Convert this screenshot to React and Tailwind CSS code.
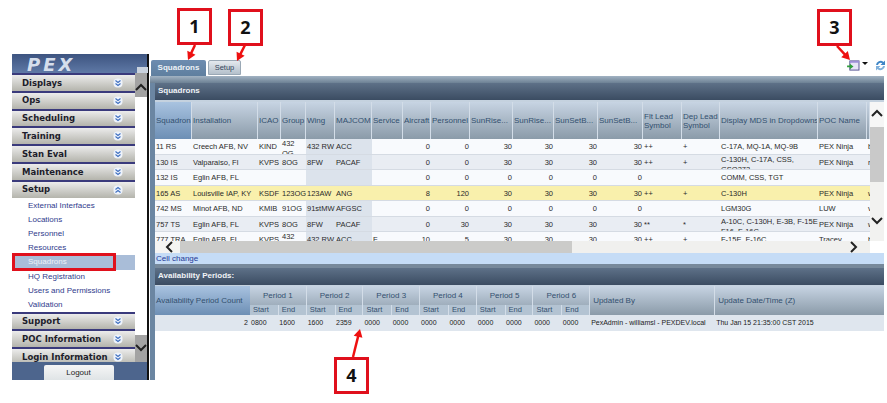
import React from 'react';

const sections = ['Displays', 'Ops', 'Scheduling', 'Training', 'Stan Eval', 'Maintenance'];
const setupLinks = ['External Interfaces', 'Locations', 'Personnel', 'Resources', 'Squadrons', 'HQ Registration', 'Users and Permissions', 'Validation'];

const columns = [
  ['Squadron', 37], ['Installation', 66], ['ICAO', 23], ['Group', 25], ['Wing', 29], ['MAJCOM', 37], ['Service', 31],
  ['Aircraft', 28], ['Personnel', 39], ['SunRise...', 43], ['SunRise...', 41], ['SunSetB...', 44], ['SunSetB...', 45],
  ['Flt Lead Symbol', 39], ['Dep Lead Symbol', 38], ['Display MDS in Dropdowns', 98], ['POC Name', 49], ['', 3],
];

const rows = [
  ['11 RS', 'Creech AFB, NV', 'KIND', '432\nOG', '432 RW', 'ACC', '', 0, 0, 30, 30, 30, 30, '++', '+', 'C-17A, MQ-1A, MQ-9B', 'PEX Ninja', 'b'],
  ['130 IS', 'Valparaiso, Fl', 'KVPS', '8OG', '8FW', 'PACAF', '', 0, 0, 30, 30, 30, 30, '++', '+', 'C-130H, C-17A, CSS,\nGSO272', 'PEX Ninja', 'r'],
  ['132 IS', 'Eglin AFB, FL', '', '', '', '', '', 0, 0, 0, 0, 0, 0, '', '', 'COMM, CSS, TGT', '', ''],
  ['165 AS', 'Louisville IAP, KY', 'KSDF', '123OG', '123AW', 'ANG', '', 8, 120, 30, 30, 30, 30, '++', '+', 'C-130H', 'PEX Ninja', 'w'],
  ['742 MS', 'Minot AFB, ND', 'KMIB', '91OG', '91stMW', 'AFGSC', '', 0, 0, 0, 0, 0, 0, '', '', 'LGM30G', 'LUW', 'v'],
  ['757 TS', 'Eglin AFB, FL', 'KVPS', '8OG', '8FW', 'PACAF', '', 0, 30, 30, 30, 30, 30, '**', '*', 'A-10C, C-130H, E-3B, F-15E,\nF16, F-16C,', 'PEX Ninja', 'w'],
  ['777 TRA', 'Eglin AFB, FL', 'KVPS', '432\nOG', '432 RW', 'ACC', 'F', 10, 5, 30, 30, 30, 30, '++', '+', 'F-15E, F-16C', 'Tracey', 'b'],
];

const periodValues = ['0800', '1600', '1600', '2359', '0000', '0000', '0000', '0000', '0000', '0000', '0000', '0000'];

// little round badge with the double chevrons on each accordion bar
const ChevronBadge = ({ up }) => (
  <svg width="10" height="10" viewBox="0 0 10 10" className="shrink-0">
    <rect x="0.5" y="0.5" width="9" height="9" rx="4" fill="#eef3fb" />
    <path d={up ? 'M2.5 4.5 5 2.5 7.5 4.5M2.5 7.5 5 5.5 7.5 7.5' : 'M2.5 2.5 5 4.5 7.5 2.5M2.5 5.5 5 7.5 7.5 5.5'} fill="none" stroke="#3f6fc0" strokeWidth="1.1" />
  </svg>
);

const SectionBar = ({ label, up }) => (
  <div className="h-[17.8px] shrink-0 flex items-center justify-between pl-[10px] pr-[12px] border-t-2 border-[#3a3a7c] bg-gradient-to-b from-[#ececec] to-[#b4b4ac]">
    <span className="text-[8.5px] font-bold text-[#1d1d2b] font-['DejaVu_Sans',sans-serif] whitespace-nowrap">{label}</span>
    <ChevronBadge up={up} />
  </div>
);

const Chevron = ({ dir, className }) => {
  const d = { up: 'M1 7 6 2l5 5', down: 'M1 2l5 5 5-5', left: 'M7 1 2 6l5 5', right: 'M2 1l5 5-5 5' }[dir];
  return (
    <svg width="12" height="12" viewBox="0 0 12 12" className={className}>
      <path d={d} fill="none" stroke="#222" strokeWidth="2" />
    </svg>
  );
};

const Sidebar = () => (
  <aside className="w-[137px] h-[326px] shrink-0 flex flex-col bg-[#4d658d] border-r-2 border-[#111]">
    <div className="h-[19px] shrink-0 relative pl-[15px] rounded-t-[3px] bg-gradient-to-b from-[#3d5480] to-[#5f79a6]">
      <span className="text-[18px] leading-[18px] font-bold italic tracking-[3px] text-[#d5deec] font-['DejaVu_Sans',sans-serif]">PEX</span>
      <span className="absolute right-[-1px] bottom-0 w-[11px] h-[6px] bg-[#c9d2de]" />
    </div>
    <div className="h-[289px] shrink-0 flex">
      <div className="w-[123px] shrink-0 flex flex-col overflow-hidden bg-white">
        {sections.map((s) => <SectionBar key={s} label={s} />)}
        <SectionBar label="Setup" up />
        <div className="h-[114px] shrink-0 py-px">
          {setupLinks.map((l) => (
            <div
              key={l}
              className={`h-[14.2px] pl-[16px] text-[8px] leading-[14px] font-['Liberation_Sans',sans-serif] whitespace-nowrap ${l === 'Squadrons' ? 'bg-[#a9bdd8] text-[#eef2f8]' : 'text-[#2f3b8c]'}`}
            >
              {l}
            </div>
          ))}
        </div>
        <SectionBar label="Support" />
        <SectionBar label="POC Information" />
        <SectionBar label="Login Information" />
      </div>
      <div className="flex-1 flex flex-col justify-between bg-white">
        <div className="h-[24px] bg-[#a3a3a3] flex items-end justify-center pb-[2px]"><Chevron dir="up" /></div>
        <div className="h-[27px] bg-[#a3a3a3] flex items-center justify-center"><Chevron dir="down" /></div>
      </div>
    </div>
    <div className="flex-1 flex justify-center pr-[2px] items-end">
      <div className="w-[70px] h-[15px] rounded-t-[2px] bg-gradient-to-b from-[#f6f6f6] to-[#dfe4e6] text-center text-[8px] leading-[15px] text-[#222] font-['Liberation_Sans',sans-serif]">Logout</div>
    </div>
  </aside>
);

const ExportIcon = () => (
  <svg width="13" height="11" viewBox="0 0 14 12">
    <rect x="3" y="1" width="10" height="10" fill="#e6e4f6" stroke="#4d4a8c" />
    <rect x="3" y="1" width="10" height="2" fill="#9c8fd6" />
    <path d="M0 6h3V4l4 3-4 3V8H0z" fill="#2f9e3a" />
  </svg>
);

const RefreshIcon = () => (
  <svg width="11" height="13" viewBox="0 0 11 13">
    <path d="M1 6a4.500 4.500 0 0 1 7.500-3L10 1.500V6H5.500L7.300 4.200A2.800 2.800 0 0 0 3 6z" fill="#3f86c6" />
    <path d="M10 7a4.500 4.500 0 0 1-7.500 3L1 11.500V7h4.500L3.700 8.800A2.800 2.800 0 0 0 8 7z" fill="#7fb0dc" />
  </svg>
);

const Tabs = () => (
  <div className="h-[16px] shrink-0 flex items-end pl-px gap-[2px] relative">
    <div className="w-[55px] h-[16px] rounded-t-[2px] bg-gradient-to-b from-[#6d8cb0] to-[#5f7f9f] text-center text-[8px] leading-[15px] font-bold text-[#eef3f8] font-['Liberation_Sans',sans-serif]">Squadrons</div>
    <div className="w-[33px] h-[15px] mb-px rounded-t-[2px] border border-[#9aa8b5] bg-gradient-to-b from-[#e4e9ee] to-[#b4c0cb] text-center text-[7.5px] leading-[13px] text-[#34465c] font-['Liberation_Sans',sans-serif]">Setup</div>
    <div className="ml-auto flex items-start gap-[2px] self-start">
      <ExportIcon />
      <span className="w-0 h-0 mt-[2px] border-x-[3px] border-t-[3px] border-x-transparent border-t-[#111]" />
      <span className="ml-[5px] -mt-px"><RefreshIcon /></span>
    </div>
  </div>
);

const PanelHeader = ({ title }) => (
  <div className="h-[17px] shrink-0 pl-[3px] bg-gradient-to-b from-[#5e7188] to-[#3b4c62] text-[8px] leading-[16px] font-bold text-[#f0f3f7] font-['Liberation_Sans',sans-serif]">{title}</div>
);

const HeadCell = ({ label, width, active }) => (
  <div
    style={{ width }}
    className={`shrink-0 h-full flex items-center px-[1px] overflow-hidden border-r border-[#d3dde8] text-[8px] leading-[9px] text-[#33506f] ${width > 90 ? 'whitespace-nowrap' : ''} ${active ? 'bg-gradient-to-b from-[#a9c3e0] to-[#6d8fb5]' : ''}`}
  >
    {label}
  </div>
);

const Cell = ({ value, width, index, row }) => {
  const numeric = index >= 7 && index <= 12;
  const wrapped = typeof value === 'string' && value.includes('\n');
  const tint = row % 2 === 1 ? 'bg-[#e9edf3]' : 'bg-[#f8fafd]';
  let bg = tint;
  if (row === 3) bg = 'bg-[#f9f0ac]';
  else if (index === 4 || index === 5) bg = 'bg-[#dce3ec]';
  return (
    <div
      style={{ width }}
      className={`shrink-0 h-full overflow-hidden px-[1px] leading-[10px] whitespace-pre ${wrapped ? 'pt-0' : 'pt-[3px]'} ${numeric ? 'text-right' : ''} ${bg}`}
    >
      {value}
    </div>
  );
};

const SquadronGrid = () => (
  <div className="h-[151px] shrink-0 flex flex-col bg-white">
    <div className="h-[139px] shrink-0 flex">
      <div className="w-[715px] shrink-0 overflow-hidden">
        <div className="h-[37px] flex bg-gradient-to-b from-[#c7d4e3] to-[#8b9ba9]">
          {columns.map(([label, w], i) => <HeadCell key={i} label={label} width={w} active={i === 0} />)}
        </div>
        {rows.map((r, ri) => (
          <div key={ri} className="h-[15.5px] flex border-b border-[#d5dbe3] text-[7.5px] text-[#2a2a2a]">
            {r.map((v, i) => <Cell key={i} value={v} width={columns[i][1]} index={i} row={ri} />)}
          </div>
        ))}
      </div>
      <div className="w-[14px] shrink-0 flex flex-col items-center bg-[#f2f2f0]">
        <div className="h-[25px] w-full flex items-center justify-center bg-[#f6f6f6]"><Chevron dir="up" /></div>
        <div className="h-[55px] w-full shrink-0 bg-[#c9c9c9]" />
        <div className="mt-auto mb-[9px] h-[20px] flex items-center justify-center"><Chevron dir="down" /></div>
      </div>
    </div>
    <div className="flex-1 flex bg-[#f0f0ee]">
      <div className="w-[25px] flex items-center justify-end pr-[3px] bg-[#f4f4f2]"><Chevron dir="left" /></div>
      <div className="w-[392px] bg-[#cbcbc9]" />
      <div className="w-[298px] flex items-center justify-end pr-[9px]"><Chevron dir="right" /></div>
      <div className="flex-1 bg-white" />
    </div>
  </div>
);

const Periods = () => (
  <div className="flex-1 bg-white">
    <div className="h-[29px] flex bg-gradient-to-b from-[#c7d4e3] to-[#8b9ba9] text-[8px] text-[#33506f]">
      <div className="w-[95px] shrink-0 flex items-center pl-px whitespace-nowrap bg-gradient-to-b from-[#a9c3e0] to-[#6d8fb5]">Availability Period Count</div>
      {[1, 2, 3, 4, 5, 6].map((p) => (
        <div key={p} className="w-[56.7px] shrink-0 flex flex-col border-r border-[#d3dde8]">
          <div className="h-[19px] flex items-center justify-center text-center">Period {p}</div>
          <div className="flex-1 flex bg-[#b3c3d2] text-[7.5px]">
            <span className="w-1/2 pl-[3px] leading-[10px]">Start</span>
            <span className="w-1/2 pl-[3px] leading-[10px] border-l border-[#d3dde8]">End</span>
          </div>
        </div>
      ))}
      <div className="w-[125px] shrink-0 flex items-center pl-[3px] border-r border-[#d3dde8]">Updated By</div>
      <div className="flex-1 flex items-center pl-[3px]">Update Date/Time (Z)</div>
    </div>
    <div className="h-[16px] flex items-center bg-[#dfe6ee] text-[7px] text-[#222]">
      <div className="w-[95px] shrink-0 text-right pr-[2px]">2</div>
      {periodValues.map((v, i) => (
        <div key={i} className="w-[28.35px] shrink-0 pl-px">{v}</div>
      ))}
      <div className="w-[125px] shrink-0 pl-px whitespace-nowrap">PexAdmin - williamsl - PEXDEV.local</div>
      <div className="flex-1 pl-[1px] whitespace-nowrap">Thu Jan 15 21:35:00 CST 2015</div>
    </div>
  </div>
);

// red numbered callouts drawn over the screenshot
const Callout = ({ n, className }) => (
  <div className={`absolute w-[35px] h-[37px] border-[3px] border-[#e0101c] bg-white flex items-center justify-center text-[18px] font-bold text-[#111] font-['Open_Sans',sans-serif] ${className}`}>{n}</div>
);

const Arrow = ({ x1, y1, x2, y2 }) => {
  const a = Math.atan2(y2 - y1, x2 - x1);
  const p = (l, o) => `${x2 - l * Math.cos(a) - o * Math.sin(a)},${y2 - l * Math.sin(a) + o * Math.cos(a)}`;
  return (
    <>
      <line x1={x1} y1={y1} x2={x2 - 6 * Math.cos(a)} y2={y2 - 6 * Math.sin(a)} stroke="#ee1010" strokeWidth="2.5" />
      <polygon points={`${x2},${y2} ${p(8, 4.5)} ${p(8, -4.5)}`} fill="#ee1010" />
    </>
  );
};

const App = () => (
  <div className="relative w-[887px] h-[403px] overflow-hidden bg-white font-['Liberation_Sans',sans-serif]">
    <div className="flex pl-[12px] pt-[54px]">
      <Sidebar />
      <main className="w-[736px] shrink-0 ml-px h-[320px] mt-[6px] flex flex-col">
        <Tabs />
        <div className="flex-1 flex flex-col pl-[5px] bg-gradient-to-r from-[#6b86a2] to-[#7d95ad] w-[734px]">
          <div className="h-[7px] shrink-0 -ml-[5px] bg-gradient-to-b from-[#a2b3c3] to-[#6d8194]" />
          <PanelHeader title="Squadrons" />
          <div className="h-[2px] shrink-0 bg-[#c5d2df]" />
          <SquadronGrid />
          <div className="h-[11px] shrink-0 bg-[#c5dcf6] pl-px text-[8px] leading-[11px] text-[#1e3a98]">Cell change</div>
          <div className="h-[4px] shrink-0 bg-[#77899b]" />
          <PanelHeader title="Availability Periods:" />
          <div className="h-px shrink-0 bg-[#c5d2df]" />
          <Periods />
        </div>
      </main>
    </div>

    <div className="absolute left-[12px] top-[253px] w-[104px] h-[18px] border-[3px] border-[#e0101c]" />
    <Callout n="1" className="left-[177px] top-[8px]" />
    <Callout n="2" className="left-[228px] top-[9px]" />
    <Callout n="3" className="left-[817px] top-[9px]" />
    <Callout n="4" className="left-[334px] top-[357px]" />
    <svg width="887" height="403" className="absolute left-0 top-0 pointer-events-none">
      <Arrow x1={195} y1={45} x2={188} y2={60} />
      <Arrow x1={245} y1={45} x2={237} y2={61} />
      <Arrow x1={837} y1={46} x2={850} y2={60} />
      <Arrow x1={353} y1={357} x2={360} y2={329} />
    </svg>
  </div>
);

export default App;
